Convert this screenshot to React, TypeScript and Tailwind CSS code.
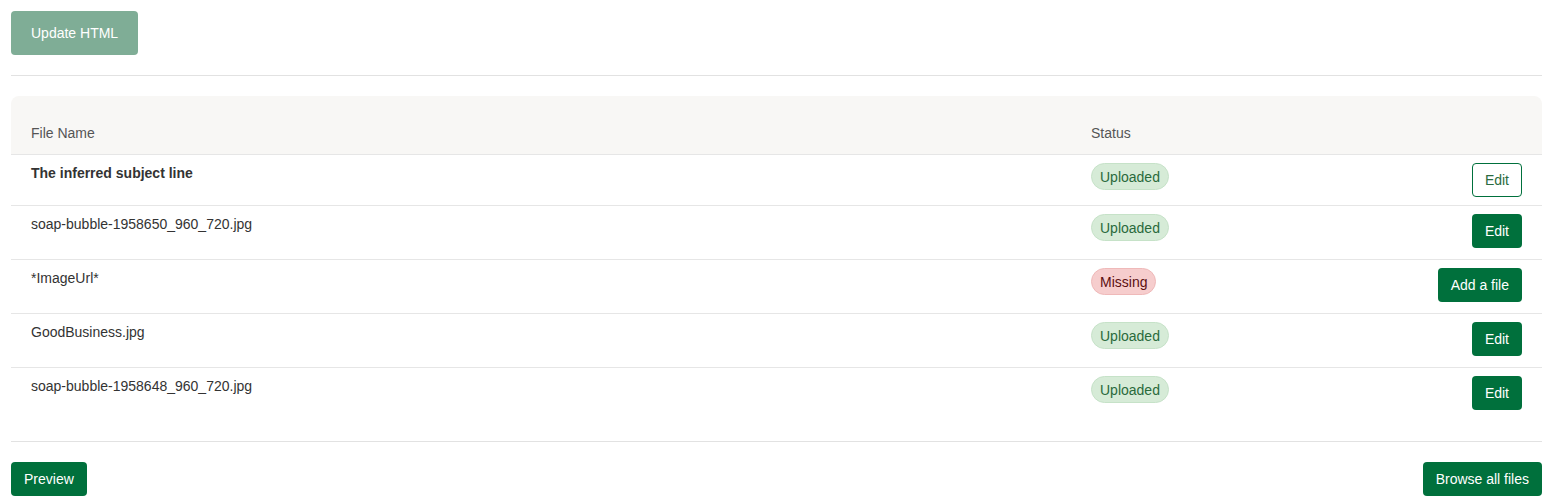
const rows = [
  { name: 'The inferred subject line', bold: true, status: 'Uploaded', action: 'Edit', outline: true },
  { name: 'soap-bubble-1958650_960_720.jpg', status: 'Uploaded', action: 'Edit' },
  { name: '*ImageUrl*', status: 'Missing', action: 'Add a file' },
  { name: 'GoodBusiness.jpg', status: 'Uploaded', action: 'Edit' },
  { name: 'soap-bubble-1958648_960_720.jpg', status: 'Uploaded', action: 'Edit' },
];

function StatusBadge({ status }: { status: string }) {
  if (status === 'Missing') {
    return (
      <span className="inline-flex h-[27px] items-center rounded-full border border-[#efb9b9] bg-[#f6cdcd] px-[8px] text-[14px] text-[#5c0f12]">
        {status}
      </span>
    );
  }
  return (
    <span className="inline-flex h-[27px] items-center rounded-full border border-[#c6e2c8] bg-[#d6ebd7] px-[8px] text-[14px] text-[#2a6a3c]">
      {status}
    </span>
  );
}

function ActionButton({ label, outline }: { label: string; outline?: boolean }) {
  if (outline) {
    return (
      <button className="h-[34px] rounded-[4px] border border-[#00703c] bg-white px-[12px] text-[14px] text-[#2b6b40]">
        {label}
      </button>
    );
  }
  return (
    <button className="h-[34px] rounded-[4px] bg-[#00703c] px-[13px] text-[14px] text-white">
      {label}
    </button>
  );
}

export default function App() {
  return (
    <div className="min-h-screen bg-white pl-[11px] pr-[13px] pt-[11px] font-['Liberation_Sans',Arial,sans-serif] text-[14px] text-[#333]">
      <button className="h-[44px] rounded-[4px] bg-[#7fad96] px-[20px] text-[14px] text-white">
        Update HTML
      </button>

      <div className="mt-[20px] border-t border-[#e2e2e2]" />

      <div className="mt-[20px] rounded-t-[8px]">
        <div className="flex h-[58px] items-end rounded-t-[8px] bg-[#f8f7f5] px-[20px] pb-[10px] text-[#555]">
          <div className="w-[1060px]">File Name</div>
          <div className="flex-1">Status</div>
        </div>
        {rows.map((r, i) => (
          <div
            key={i}
            className={`flex items-start border-t border-[#e6e6e6] px-[20px] pt-[8px] leading-[20px] ${i === 0 ? 'pb-[8px]' : 'pb-[11px]'}`}
          >
            <div className={`w-[1060px] ${r.bold ? 'font-bold text-[#333]' : 'text-[#333]'}`}>{r.name}</div>
            <div className="flex-1">
              <StatusBadge status={r.status} />
            </div>
            <ActionButton label={r.action} outline={r.outline} />
          </div>
        ))}
        <div className="h-[20px]" />
      </div>

      <div className="border-t border-[#e2e2e2]" />

      <div className="mt-[20px] flex items-center justify-between">
        <button className="h-[34px] rounded-[4px] bg-[#00703c] px-[13px] text-[14px] text-white">Preview</button>
        <button className="h-[34px] rounded-[4px] bg-[#00703c] px-[13px] text-[14px] text-white">
          Browse all files
        </button>
      </div>
    </div>
  );
}
